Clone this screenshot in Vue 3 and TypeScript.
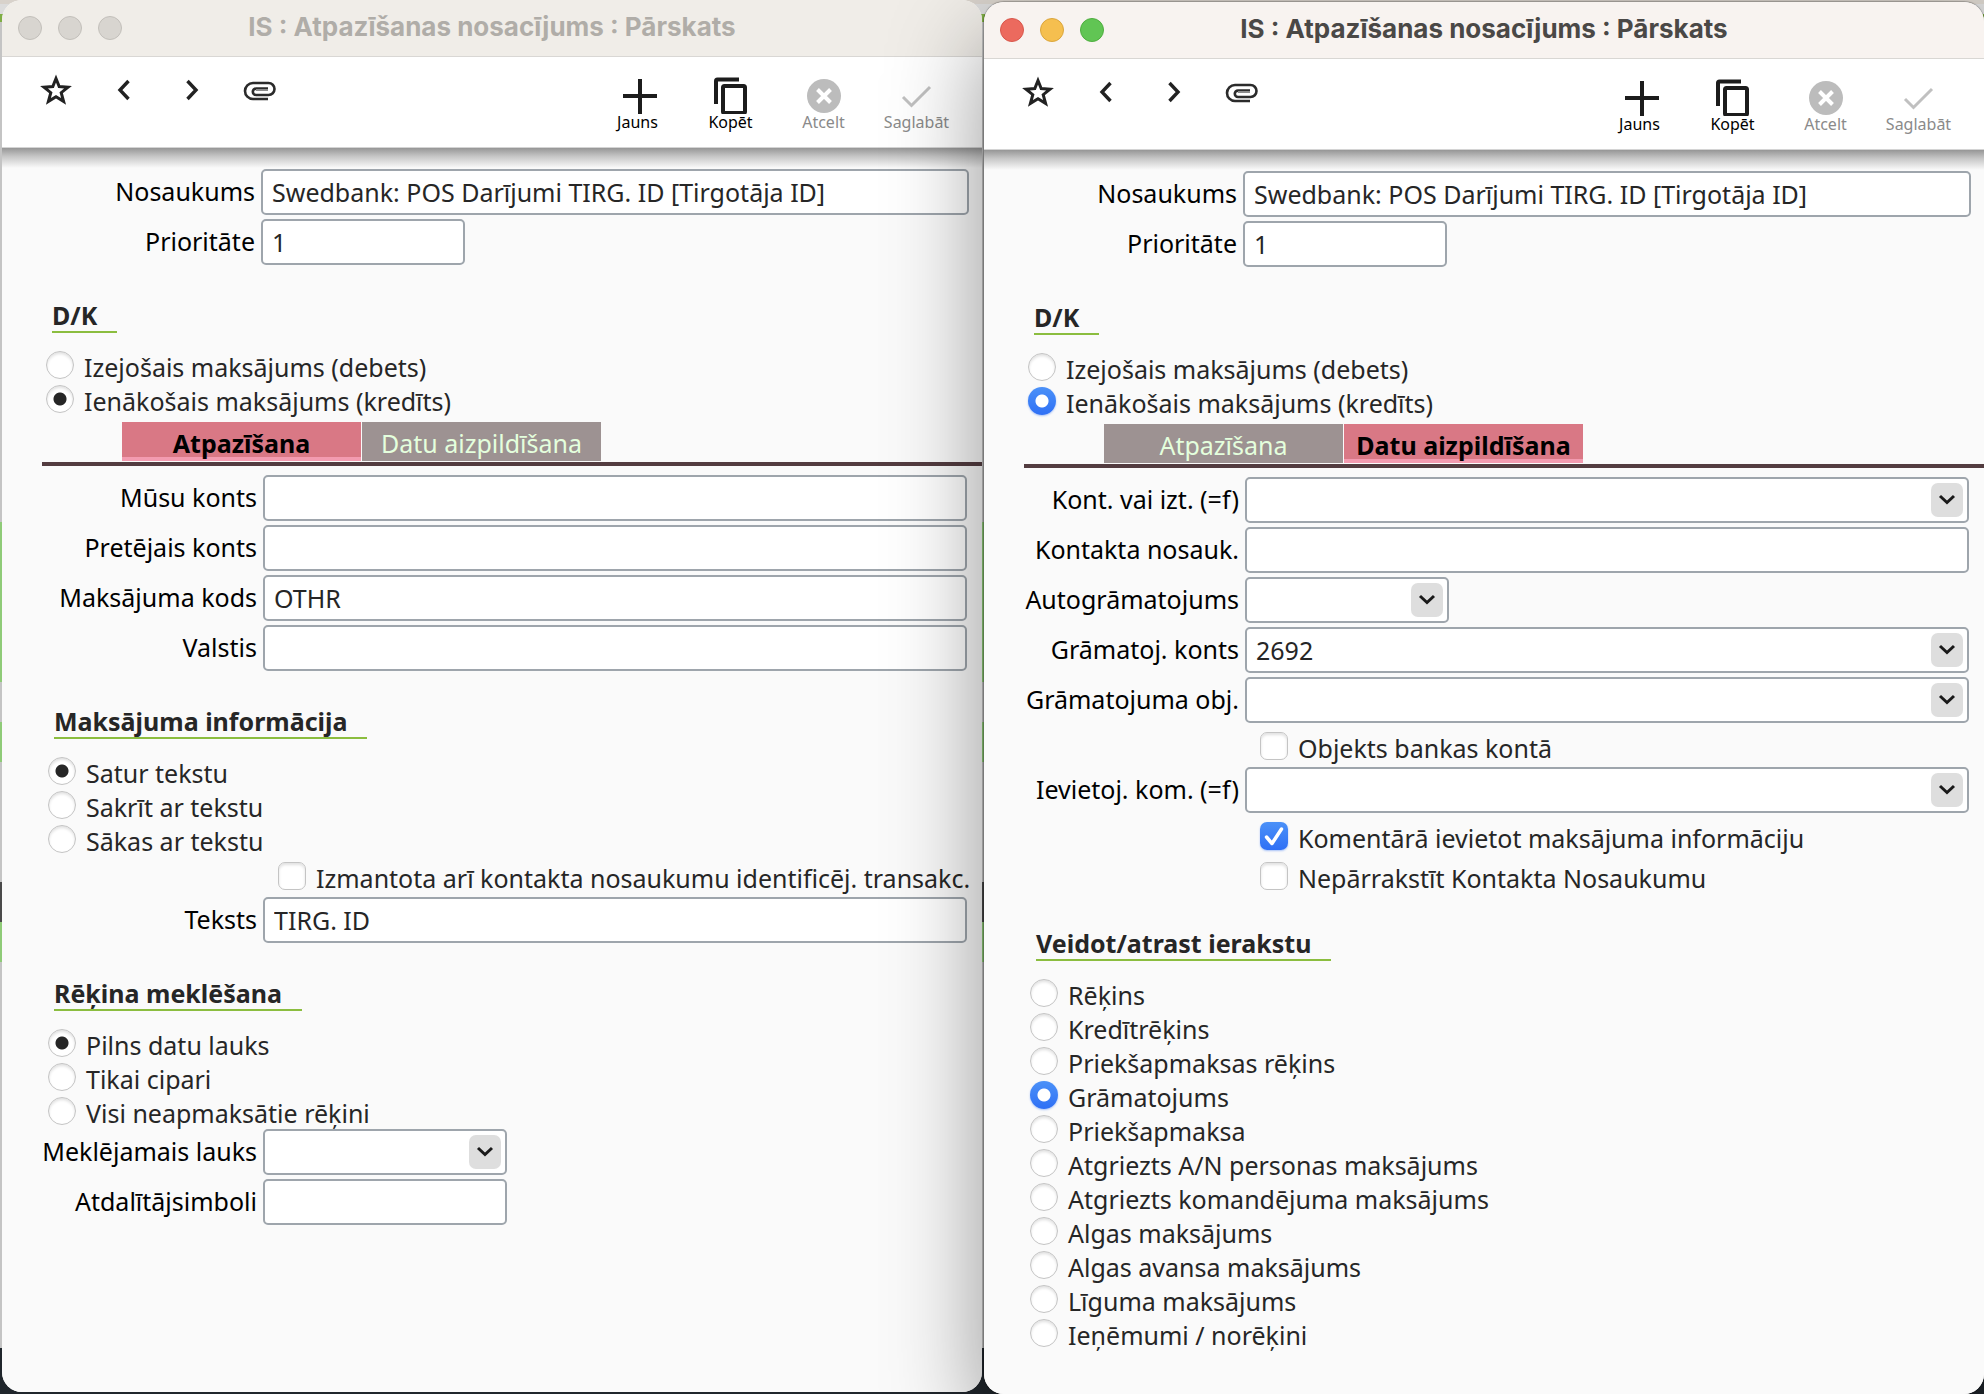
<script setup lang="ts">
import { reactive } from 'vue'

interface FieldBlock { kind: 'field'; id: string; label: string; value: string; size?: 'short' | 'medium'; menu?: boolean }
interface CheckBlock { kind: 'check'; id: string; label: string; checked: boolean }
interface HeadingBlock { kind: 'heading'; id: string; label: string }
interface RadioBlock { kind: 'radios'; id: string; label: string; options: string[]; value: string }
type Block = FieldBlock | CheckBlock | HeadingBlock | RadioBlock

interface FormWindow { id: string; active: boolean; tab: number; head: Block[]; panel: Block[] }

const title = 'IS : Atpazīšanas nosacījums : Pārskats'
const tabs = ['Atpazīšana', 'Datu aizpildīšana']

const head = (): Block[] => [
  { kind: 'field', id: 'name', label: 'Nosaukums', value: 'Swedbank: POS Darījumi TIRG. ID [Tirgotāja ID]' },
  { kind: 'field', id: 'priority', label: 'Prioritāte', value: '1', size: 'short' },
  { kind: 'heading', id: 'dk-title', label: 'D/K' },
  {
    kind: 'radios', id: 'dk', label: 'D/K', value: 'Ienākošais maksājums (kredīts)',
    options: ['Izejošais maksājums (debets)', 'Ienākošais maksājums (kredīts)'],
  },
]

const windows = reactive<FormWindow[]>([
  {
    id: 'match', active: false, tab: 0, head: head(),
    panel: [
      { kind: 'field', id: 'own', label: 'Mūsu konts', value: '' },
      { kind: 'field', id: 'other', label: 'Pretējais konts', value: '' },
      { kind: 'field', id: 'code', label: 'Maksājuma kods', value: 'OTHR' },
      { kind: 'field', id: 'country', label: 'Valstis', value: '' },
      { kind: 'heading', id: 'info-title', label: 'Maksājuma informācija' },
      {
        kind: 'radios', id: 'info', label: 'Maksājuma informācija', value: 'Satur tekstu',
        options: ['Satur tekstu', 'Sakrīt ar tekstu', 'Sākas ar tekstu'],
      },
      { kind: 'check', id: 'contact', label: 'Izmantota arī kontakta nosaukumu identificēj. transakc.', checked: false },
      { kind: 'field', id: 'text', label: 'Teksts', value: 'TIRG. ID' },
      { kind: 'heading', id: 'invoice-title', label: 'Rēķina meklēšana' },
      {
        kind: 'radios', id: 'invoice', label: 'Rēķina meklēšana', value: 'Pilns datu lauks',
        options: ['Pilns datu lauks', 'Tikai cipari', 'Visi neapmaksātie rēķini'],
      },
      { kind: 'field', id: 'search', label: 'Meklējamais lauks', value: '', size: 'medium', menu: true },
      { kind: 'field', id: 'separators', label: 'Atdalītājsimboli', value: '', size: 'medium' },
    ],
  },
  {
    id: 'fill', active: true, tab: 1, head: head(),
    panel: [
      { kind: 'field', id: 'contact', label: 'Kont. vai izt. (=f)', value: '', menu: true },
      { kind: 'field', id: 'contact-name', label: 'Kontakta nosauk.', value: '' },
      { kind: 'field', id: 'auto', label: 'Autogrāmatojums', value: '', size: 'short', menu: true },
      { kind: 'field', id: 'account', label: 'Grāmatoj. konts', value: '2692', menu: true },
      { kind: 'field', id: 'objects', label: 'Grāmatojuma obj.', value: '', menu: true },
      { kind: 'check', id: 'bank-object', label: 'Objekts bankas kontā', checked: false },
      { kind: 'field', id: 'comment', label: 'Ievietoj. kom. (=f)', value: '', menu: true },
      { kind: 'check', id: 'comment-info', label: 'Komentārā ievietot maksājuma informāciju', checked: true },
      { kind: 'check', id: 'keep-name', label: 'Nepārrakstīt Kontakta Nosaukumu', checked: false },
      { kind: 'heading', id: 'record-title', label: 'Veidot/atrast ierakstu' },
      {
        kind: 'radios', id: 'record', label: 'Veidot/atrast ierakstu', value: 'Grāmatojums',
        options: [
          'Rēķins', 'Kredītrēķins', 'Priekšapmaksas rēķins', 'Grāmatojums', 'Priekšapmaksa',
          'Atgriezts A/N personas maksājums', 'Atgriezts komandējuma maksājums', 'Algas maksājums',
          'Algas avansa maksājums', 'Līguma maksājums', 'Ieņēmumi / norēķini',
        ],
      },
    ],
  },
])
</script>

<template>
  <main class="desktop">
    <section v-for="win in windows" :key="win.id" class="window" :class="{ active: win.active }">
      <header class="titlebar">
        <div class="lights">
          <button type="button" class="light close" aria-label="Aizvērt"></button>
          <button type="button" class="light minimise" aria-label="Minimizēt"></button>
          <button type="button" class="light zoom" aria-label="Palielināt"></button>
        </div>
        <h1>{{ title }}</h1>
      </header>

      <nav class="toolbar">
        <div class="tools">
          <button type="button" aria-label="Izlase">
            <svg width="34" height="34" viewBox="0 0 34 34" fill="none" stroke="#222" stroke-width="3">
              <path d="M17 5.5 L20.2 13.6 L29 14.2 L22.2 19.7 L24.6 28.4 L17 23.7 L9.4 28.4 L11.8 19.7 L5 14.2 L13.8 13.6 Z" />
            </svg>
          </button>
          <button type="button" aria-label="Iepriekšējais">
            <svg width="34" height="34" viewBox="0 0 34 34" fill="none" stroke="#222" stroke-width="3.4">
              <path d="M21.500 8 L13 17 L21.500 26" />
            </svg>
          </button>
          <button type="button" aria-label="Nākamais">
            <svg width="34" height="34" viewBox="0 0 34 34" fill="none" stroke="#222" stroke-width="3.4">
              <path d="M12.500 8 L21 17 L12.500 26" />
            </svg>
          </button>
          <button type="button" aria-label="Pielikumi">
            <svg width="34" height="34" viewBox="0 0 34 34" fill="none" stroke="#2b2b2b" stroke-width="2.600">
              <path d="M25 26 H10 A8 8 0 0 1 10 10 H25.500 A6 6 0 0 1 25.500 22 H13 A3.200 3.200 0 0 1 13 15.600 H25" />
              <path d="M13 17 H25" stroke="#8a8a8a" stroke-width="2" />
            </svg>
          </button>
        </div>
        <div class="actions">
          <button type="button">
            <svg width="38" height="38" viewBox="0 0 38 38" fill="none" stroke="#1c1c1c" stroke-width="4">
              <path d="M21 3 V38 M4 20 H38" />
            </svg>
            <span>Jauns</span>
          </button>
          <button type="button">
            <svg width="38" height="38" viewBox="0 0 38 38" fill="none" stroke="#1c1c1c" stroke-width="4">
              <path d="M4 28 V5 Q4 3.500 5.500 3.500 H27" />
              <rect x="11" y="10" width="22" height="27" rx="1.500" />
            </svg>
            <span>Kopēt</span>
          </button>
          <button type="button" disabled>
            <svg width="38" height="38" viewBox="0 0 38 38">
              <circle cx="19" cy="20" r="17" fill="#bcbcbc" />
              <path d="M12.500 13.500 L25.500 26.500 M25.500 13.500 L12.500 26.500" stroke="#fff" stroke-width="4" />
            </svg>
            <span>Atcelt</span>
          </button>
          <button type="button" disabled>
            <svg width="38" height="38" viewBox="0 0 38 38" fill="none" stroke="#c0c0c0" stroke-width="3">
              <path d="M5 21 L13.500 29.500 L32 11" />
            </svg>
            <span>Saglabāt</span>
          </button>
        </div>
      </nav>

      <form class="form" @submit.prevent>
        <div v-for="part in (['head', 'panel'] as const)" :key="part" class="part" :class="part">
          <div v-if="part === 'panel'" class="tabs" role="tablist">
            <button
              v-for="(tab, i) in tabs" :key="tab" type="button" role="tab"
              :aria-selected="win.tab === i" :class="{ selected: win.tab === i }"
              @click="win.tab = i"
            >{{ tab }}</button>
          </div>
          <template v-for="block in win[part]" :key="block.id">
            <div v-if="block.kind === 'field'" class="field">
              <label :for="`${win.id}-${part}-${block.id}`">{{ block.label }}</label>
              <div class="control" :class="block.size">
                <select v-if="block.menu" :id="`${win.id}-${part}-${block.id}`" v-model="block.value">
                  <option :value="block.value">{{ block.value }}</option>
                </select>
                <input v-else :id="`${win.id}-${part}-${block.id}`" v-model="block.value" type="text" />
                <span v-if="block.menu" class="arrow">
                  <svg width="18" height="12" viewBox="0 0 18 12" fill="none" stroke="#1a1a1a" stroke-width="3">
                    <path d="M2 2 L9 8.500 L16 2" />
                  </svg>
                </span>
              </div>
            </div>
            <label v-else-if="block.kind === 'check'" class="check">
              <input v-model="block.checked" type="checkbox" />
              <svg v-if="block.checked" class="tick" width="28" height="28" viewBox="0 0 28 28" fill="none" stroke="#fff" stroke-width="3.500" stroke-linecap="round" stroke-linejoin="round">
                <path d="M6.500 15 L12 21.500 L21.500 7" />
              </svg>
              <span>{{ block.label }}</span>
            </label>
            <h2 v-else-if="block.kind === 'heading'">{{ block.label }}</h2>
            <div v-else class="radios" role="radiogroup" :aria-label="block.label">
              <label v-for="option in block.options" :key="option">
                <input v-model="block.value" type="radio" :name="`${win.id}-${block.id}`" :value="option" />
                <span>{{ option }}</span>
              </label>
            </div>
          </template>
        </div>
      </form>
    </section>
  </main>
</template>

<style>
body {
  margin: 0;
}
</style>

<style scoped>
.desktop {
  box-sizing: border-box;
  min-height: 100vh;
  padding-left: 2px;
  display: grid;
  grid-template-columns: 49fr 50fr;
  column-gap: 2px;
  overflow: hidden;
  font-family: "Noto Sans", "Open Sans", sans-serif;
  font-size: 25px;
  line-height: 32px;
  color: #262626;
  background: linear-gradient(
    #d8d2cb 0 4px, #dcdcdc 4px 14px, #7fae45 14px 22px, #c4c4c4 22px 522px, #8fcb78 522px 682px,
    #c4c4c4 682px 722px, #8fcb78 722px 762px, #c4c4c4 762px 882px, #4a4a4a 882px 922px,
    #8fcb78 922px 962px, #c4c4c4 962px 1348px, #20262c 1348px
  );
}

.window {
  box-sizing: border-box;
  display: flex;
  flex-direction: column;
  min-width: 0;
  margin-bottom: 2px;
  border-radius: 20px;
  overflow: hidden;
  background: #fafafa;
}

.window.active {
  z-index: 1;
  margin-top: 2px;
  margin-bottom: 0;
  box-shadow: 0 0 1px 1px rgba(0, 0, 0, 0.25), 0 36px 96px rgba(0, 0, 0, 0.42);
}

.titlebar {
  display: grid;
  grid-template-columns: 1fr auto 1fr;
  align-items: center;
  height: 56px;
  border-bottom: 1px solid #d9d7d4;
  background: #f0ede8;
  color: #b0ada8;
}

.active .titlebar {
  background: #f8f3f0;
  color: #4a4846;
}

h1 {
  margin: 0;
  padding-bottom: 2px;
  font-family: Inter, "Liberation Sans", sans-serif;
  font-size: 26px;
  line-height: 32px;
  font-weight: 700;
}

.lights {
  display: flex;
  gap: 16px;
  padding-left: 16px;
}

.light {
  width: 24px;
  height: 24px;
  padding: 0;
  border: 1px solid #c2bfba;
  border-radius: 50%;
  background: #d8d5d0;
}

.active .close {
  border-color: #d8574c;
  background: #ec6a5e;
}

.active .minimise {
  border-color: #dba63c;
  background: #f5bf4f;
}

.active .zoom {
  border-color: #4fae3f;
  background: #61c554;
}

.toolbar {
  display: flex;
  justify-content: space-between;
  height: 90px;
  padding: 0 19px 0 20px;
  border-bottom: 1px solid #d4d4d4;
  background: #fff;
}

.toolbar button {
  padding: 0;
  border: 0;
  background: none;
  font-family: inherit;
  font-size: 16px;
  line-height: 16px;
  color: #000;
}

.toolbar svg {
  display: block;
}

.tools {
  display: flex;
  align-items: flex-start;
  padding-top: 16px;
}

.tools button {
  width: 68px;
  display: flex;
  justify-content: center;
}

.actions {
  display: flex;
  align-items: flex-start;
  padding-top: 19px;
}

.actions button {
  width: 93px;
  display: flex;
  flex-direction: column;
  align-items: center;
}

.toolbar button:disabled {
  color: #8a8a8a;
}

.form {
  flex: 1;
  padding: 21px 0 24px;
  background: linear-gradient(#969696, #c4c4c4 8px, #fafafa 20px);
}

.part {
  display: flex;
  flex-direction: column;
}

.field {
  display: flex;
  align-items: center;
  margin-bottom: 4px;
  padding-right: 13px;
}

.field label {
  flex: none;
  box-sizing: border-box;
  width: 259px;
  padding: 0 6px 3px 0;
  text-align: right;
  white-space: nowrap;
  color: #000;
}

.control {
  position: relative;
  flex: 1;
}

.control.short {
  flex: 0 0 204px;
}

.control.medium {
  flex: 0 0 244px;
}

.control input,
.control select {
  display: block;
  box-sizing: border-box;
  width: 100%;
  height: 46px;
  padding: 0 9px;
  border: 2px solid #9ea5ac;
  border-radius: 5px;
  outline: 0;
  appearance: none;
  background: #fff;
  font: inherit;
  color: #262626;
}

.arrow {
  position: absolute;
  top: 6px;
  right: 6px;
  display: flex;
  align-items: center;
  justify-content: center;
  width: 32px;
  height: 34px;
  border-radius: 7px;
  background: #dedede;
  pointer-events: none;
}

h2 {
  width: fit-content;
  margin: 30px 0 15px 50px;
  padding-right: 20px;
  border-bottom: 2px solid #8bbd3f;
  font-size: 25px;
  line-height: 32px;
  font-weight: 700;
}

.radios {
  padding: 0 0 1px 44px;
}

.radios label {
  display: flex;
  align-items: center;
  gap: 10px;
  width: fit-content;
  height: 34px;
}

.radios span,
.check span {
  padding-top: 3px;
  white-space: nowrap;
}

.radios input,
.check input {
  flex: none;
  width: 28px;
  height: 28px;
  margin: 0;
  border: 1px solid #c4c4c4;
  border-radius: 50%;
  appearance: none;
  background: #fff;
  box-shadow: inset 0 2px 3px rgba(0, 0, 0, 0.12);
}

.radios input:checked {
  background: radial-gradient(circle, #262626 6px, #fff 7px);
}

.active .radios input:checked {
  border: 0;
  background: radial-gradient(circle, #fff 6px, transparent 7px), linear-gradient(#4b91f8, #2f70f5);
  box-shadow: 0 1px 2px rgba(47, 112, 245, 0.4);
}

.check {
  position: relative;
  display: flex;
  align-items: center;
  gap: 10px;
  width: fit-content;
  height: 38px;
  padding: 0 0 2px 274px;
}

.check input {
  border-radius: 7px;
}

.check input:checked {
  border: 0;
  background: linear-gradient(#4b91f8, #2f70f5);
  box-shadow: 0 1px 2px rgba(47, 112, 245, 0.4);
}

.tick {
  position: absolute;
  left: 274px;
  pointer-events: none;
}

.tabs {
  display: flex;
  gap: 1px;
  margin: 5px 0 9px 38px;
  padding: 0 0 1px 80px;
  border-bottom: 4px solid #533c40;
}

.tabs button {
  flex: 0 0 239px;
  height: 39px;
  padding: 2px 0 0;
  border: 0;
  background: #9d9292;
  font: inherit;
  white-space: nowrap;
  color: #e4ffdd;
}

.tabs button.selected {
  background: linear-gradient(#d97885 35px, #f39bb0 35px);
  font-weight: 700;
  color: #000;
}

.panel {
  padding: 0 2px;
}

.panel .tabs {
  margin-right: -2px;
}
</style>
